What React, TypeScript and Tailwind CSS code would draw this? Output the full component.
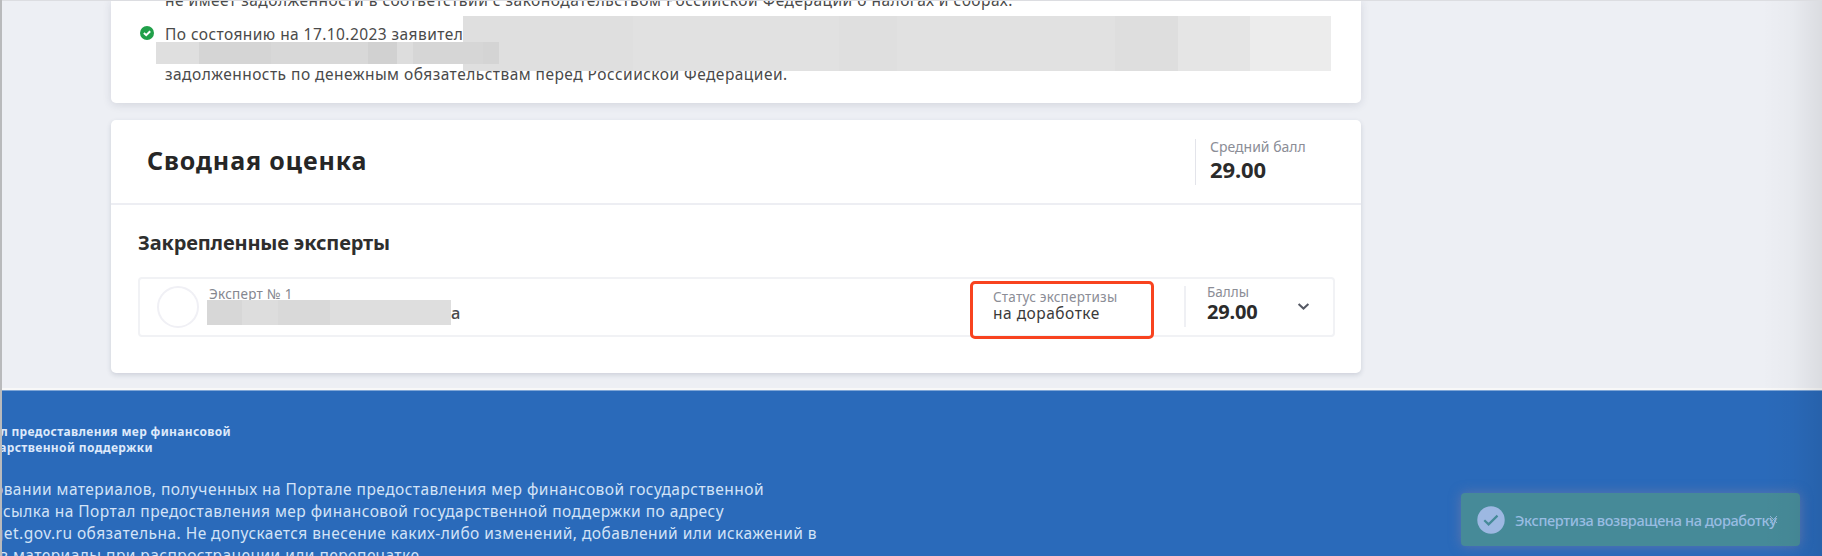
import React from 'react';

type Segment = { w: number; c: string };

const wideMask: Segment[] = [
  { w: 170, c: '#dfdfdf' },
  { w: 206, c: '#e1e1e1' },
  { w: 58, c: '#dfdfdf' },
  { w: 218, c: '#e1e1e1' },
  { w: 63, c: '#dedede' },
  { w: 72, c: '#e5e5e5' },
  { w: 81, c: '#ececec' },
];

const lineMask: Segment[] = [
  { w: 43, c: '#dfdfdf' },
  { w: 72, c: '#d5d5d5' },
  { w: 97, c: '#d8d8d8' },
  { w: 29, c: '#d1d1d1' },
  { w: 16, c: '#dddddd' },
  { w: 70, c: '#d6d6d6' },
  { w: 16, c: '#d4d4d4' },
];

const nameMask: Segment[] = [
  { w: 35, c: '#d7d7d7' },
  { w: 36, c: '#dddddd' },
  { w: 52, c: '#d9d9d9' },
  { w: 121, c: '#dedede' },
];

function Mask({ segments, className }: { segments: Segment[]; className: string }) {
  return (
    <div className={`flex ${className}`}>
      {segments.map((s, i) => (
        <div key={i} className="h-full shrink-0" style={{ width: s.w, backgroundColor: s.c }} />
      ))}
    </div>
  );
}

function CheckCard() {
  return (
    <section className="relative flex h-[103px] flex-col rounded-b-[5px] bg-white pl-[54px] text-[15.5px] leading-[20px] tracking-[0.49px] text-[#4a4a4a] shadow-[0_2px_8px_rgba(40,50,80,0.13)]">
      <p className="-mt-[10px] h-[34px] shrink-0 whitespace-nowrap">
        не имеет задолженности в соответствии с законодательством Российской Федерации о налогах и сборах.
      </p>
      <div className="relative">
        <svg className="absolute -left-[25px] top-[2px]" width="14" height="14" viewBox="0 0 14 14" fill="none">
          <circle cx="7" cy="7" r="7" fill="#21a04a" />
          <path d="M3.9 7.1 6.2 9.2 10.2 5.2" stroke="#fff" strokeWidth="2" />
        </svg>
        <p className="h-[40px] whitespace-nowrap tracking-[0.43px]">По состоянию на 17.10.2023 заявитель</p>
        <p className="whitespace-nowrap tracking-[0.47px]">задолженность по денежным обязательствам перед Российской Федерацией.</p>
      </div>
      <Mask segments={wideMask} className="absolute left-[352px] top-[16px] h-[55px]" />
      <Mask segments={lineMask} className="absolute left-[45px] top-[42px] h-[22px]" />
    </section>
  );
}

function SummaryCard() {
  return (
    <section className="mt-[17px] h-[253px] rounded-[5px] bg-white shadow-[0_2px_5px_rgba(40,50,80,0.16)]">
      <header className="flex h-[85px] items-start justify-between border-b-2 border-[#edeef3] pl-[36px] pr-[30px]">
        <h2 className="mt-[22px] text-[25px] leading-[36px] font-bold tracking-[0.9px] text-[#262626]">Сводная оценка</h2>
        <div className="mt-[19px] h-[46px] w-[136px] border-l border-[#e3e4ea] pl-[14px]">
          <div className="-mt-px whitespace-nowrap text-[14px] leading-[18px] text-[#8b8d96]">Средний балл</div>
          <div className="mt-px text-[22px] leading-[24px] font-bold tracking-[-0.1px] text-[#2b2b2b]">29.00</div>
        </div>
      </header>
      <div className="px-[27px] pt-[25px]">
        <h3 className="text-[20px] leading-[26px] font-bold tracking-[-0.15px] text-[#2e2e2e]">Закрепленные эксперты</h3>
        <div className="mt-[21px] flex h-[60px] w-[1197px] items-start rounded-[4px] border-2 border-[#f1f2f5]">
          <div className="ml-[17px] mt-[7px] size-[42px] shrink-0 rounded-full border-2 border-[#f0f0f5]" />
          <div className="ml-[8px] mt-[5px] w-[254px]">
            <div className="h-[16px] overflow-hidden pl-[2px] text-[13.5px] leading-[20px] tracking-[0.27px] text-[#85878f]">Эксперт № 1</div>
            <div className="flex">
              <Mask segments={nameMask} className="h-[25px] w-[244px]" />
              <span className="text-[16.5px] leading-[25px] font-medium text-[#4a4a4a]">а</span>
            </div>
          </div>
          <div className="ml-[509px] mt-[2px] h-[58px] w-[184px] shrink-0 rounded-[5px] border-[3px] border-[#f8431f] pl-[20px] pt-[4px]">
            <div className="whitespace-nowrap text-[13.5px] leading-[18px] tracking-[0.22px] text-[#8b8d96]">Статус экспертизы</div>
            <div className="-mt-[2px] whitespace-nowrap text-[15.5px] leading-[18px] tracking-[0.5px] text-[#3a3a3a]">на доработке</div>
          </div>
          <div className="ml-[30px] mt-[7px] h-[41px] w-[86px] shrink-0 border-l-2 border-[#eff0f4] pl-[21px]">
            <div className="-mt-[3px] text-[13.5px] leading-[18px] text-[#8b8d96]">Баллы</div>
            <div className="-mt-px text-[20px] leading-[24px] font-bold tracking-[-0.2px] text-[#2b2b2b]">29.00</div>
          </div>
          <svg className="ml-[27px] mt-[23px] shrink-0" width="13" height="10" viewBox="0 0 13 10" fill="none">
            <path d="M1.6 2 6.5 6.6 11.4 2" stroke="#555964" strokeWidth="2" />
          </svg>
        </div>
      </div>
    </section>
  );
}

function Footer() {
  return (
    <footer className="flex h-[166px] flex-col items-start border-t border-[#7fa6d6] bg-[#2a6aba] text-[#d3e3f7]">
      <div className="mt-[33px] w-[229px] text-[12px] leading-[16px] font-bold whitespace-nowrap text-[#dde9fa]">
        <p className="flex justify-end tracking-[0.34px]">Портал предоставления мер финансовой</p>
      </div>
      <div className="w-[151px] text-[12px] leading-[16px] font-bold whitespace-nowrap text-[#dde9fa]">
        <p className="flex justify-end tracking-[0.36px]">государственной поддержки</p>
      </div>
      <div className="mt-[22px] text-[15.5px] leading-[22px] tracking-[0.46px] whitespace-nowrap">
        <p className="flex w-[762px] justify-end">При использовании материалов, полученных на Портале предоставления мер финансовой государственной</p>
        <p className="flex w-[722px] justify-end">ссылка на Портал предоставления мер финансовой государственной поддержки по адресу</p>
        <p className="flex w-[815px] justify-end">promote.budget.gov.ru обязательна. Не допускается внесение каких-либо изменений, добавлений или искажений в</p>
        <p className="flex w-[422px] justify-end tracking-[0.46px]">в материалы при распространении или перепечатке.</p>
      </div>
    </footer>
  );
}

function Toast() {
  return (
    <div className="absolute left-[1461px] top-[493px] flex h-[53px] w-[339px] items-center rounded-[4px] bg-[#468a98] pl-[16px] shadow-[0_0_12px_rgba(125,125,165,0.65)]">
      <svg className="shrink-0" width="28" height="28" viewBox="0 0 28 28" fill="none">
        <circle cx="14" cy="14" r="13.7" fill="#9db8e2" />
        <path d="M7.3 14.2 11.6 18.4 20.5 9.6" stroke="#468a98" strokeWidth="2.2" />
      </svg>
      <span className="ml-[10px] whitespace-nowrap text-[14.5px] leading-[20px] font-medium tracking-[-0.36px] text-[#98bce2]">
        Экспертиза возвращена на доработку
      </span>
      <svg className="absolute right-[22px] top-[22px]" width="9" height="9" viewBox="0 0 9 9" fill="none">
        <path d="M1 1 8 8M8 1 1 8" stroke="#8fb6d6" strokeWidth="1" />
      </svg>
    </div>
  );
}

export default function App() {
  return (
    <div className="relative h-[556px] w-[1822px] overflow-hidden border-l-2 border-[#b9babc] bg-[#edeff4] font-['Noto_Sans',sans-serif]">
      <main className="h-[390px] border-b-2 border-[#f8f8f8] pl-[109px]">
        <div className="w-[1250px]">
          <CheckCard />
          <SummaryCard />
        </div>
      </main>
      <Footer />
      <div className="absolute -left-[2px] top-0 h-full w-full">
        <Toast />
      </div>
      <div className="absolute right-0 top-0 h-full w-[60px] bg-linear-to-r from-black/0 via-black/2 to-black/8" />
      <div className="absolute left-0 top-0 h-px w-full bg-[#dcdde1]" />
    </div>
  );
}
